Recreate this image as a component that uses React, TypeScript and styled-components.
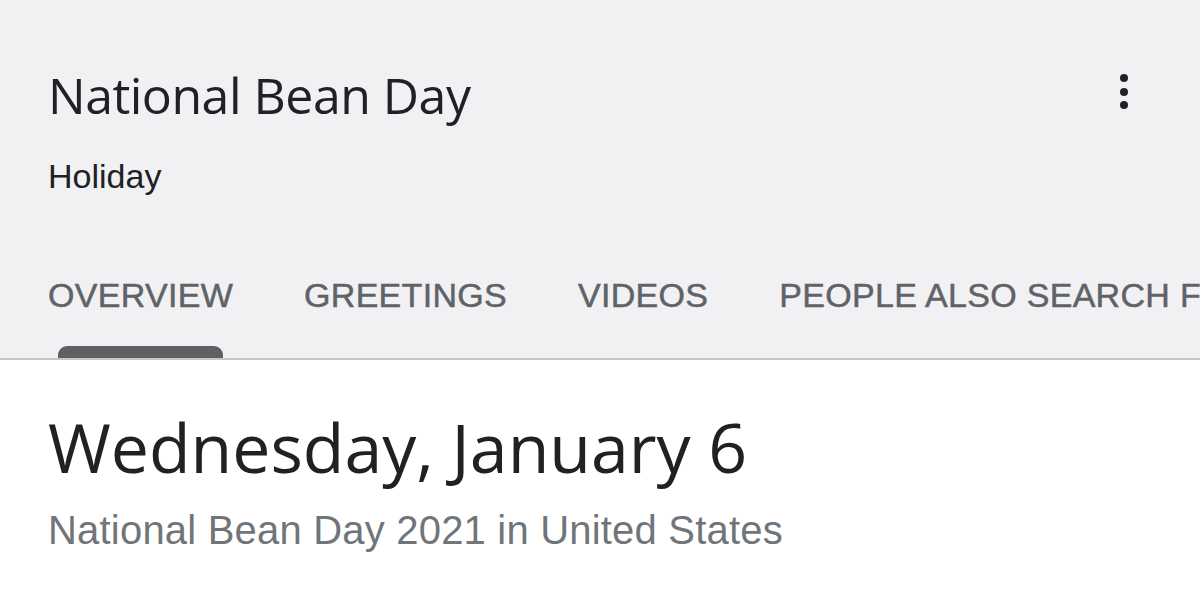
import styled, { createGlobalStyle } from "styled-components";

const GlobalStyle = createGlobalStyle`
    html, body {
        margin: 0;
        padding: 0;
        background: #ffffff;
    }
    body {
        width: 1200px;
        height: 604px;
        overflow: hidden;
    }
`;

const Page = styled.div`
    width: 1200px;
    height: 604px;
    display: flex;
    flex-direction: column;
    background: #ffffff;
`;

const Header = styled.header`
    background: #f1f1f3;
    border-bottom: 2px solid #c6c6c8;
    padding: 0 0 0 48px;
    overflow: hidden;
`;

const TopRow = styled.div`
    display: flex;
    justify-content: space-between;
    align-items: flex-start;
    padding-top: 63px;
    padding-right: 72px;
`;

const Title = styled.h1`
    margin: 0;
    font-family: "Open Sans", sans-serif;
    font-weight: 400;
    font-size: 50px;
    line-height: 64px;
    color: #202124;
    letter-spacing: -0.5px;
`;

const MoreButton = styled.div`
    display: flex;
    flex-direction: column;
    gap: 5.5px;
    padding-top: 11px;
`;

const Dot = styled.span`
    width: 8px;
    height: 8px;
    border-radius: 50%;
    background: #202124;
`;

const Subtitle = styled.div`
    margin-top: 29px;
    font-family: "Liberation Sans", Arial, sans-serif;
    font-size: 34px;
    color: #202124;
    line-height: 40px;
`;

const Tabs = styled.nav`
    display: flex;
    gap: 71px;
    margin-top: 78.5px;
    white-space: nowrap;
`;

const Tab = styled.div<{ $active?: boolean }>`
    position: relative;
    font-family: "Liberation Sans", Arial, sans-serif;
    font-size: 34px;
    line-height: 40px;
    letter-spacing: 0.3px;
    color: #5f6368;
    -webkit-text-stroke: 0.5px #5f6368;
    padding-bottom: 43.5px;
    &::after {
        content: "";
        display: ${(p) => (p.$active ? "block" : "none")};
        position: absolute;
        left: 10px;
        right: 10px;
        bottom: 0;
        height: 12px;
        border-radius: 9px 9px 0 0;
        background: #5f6063;
    }
`;

const Body = styled.section`
    padding: 45px 48px 0;
`;

const DateLine = styled.div`
    font-family: "Open Sans", sans-serif;
    font-size: 68px;
    line-height: 84px;
    color: #202124;
`;

const Caption = styled.div`
    margin-top: 16px;
    font-family: "Liberation Sans", Arial, sans-serif;
    font-size: 40px;
    line-height: 50px;
    letter-spacing: 0.2px;
    color: #70757a;
`;

const tabs = ["OVERVIEW", "GREETINGS", "VIDEOS", "PEOPLE ALSO SEARCH FOR"];

function App() {
    return (
        <Page>
            <GlobalStyle />
            <Header>
                <TopRow>
                    <Title>National Bean Day</Title>
                    <MoreButton>
                        <Dot />
                        <Dot />
                        <Dot />
                    </MoreButton>
                </TopRow>
                <Subtitle>Holiday</Subtitle>
                <Tabs>
                    {tabs.map((t, i) => (
                        <Tab key={t} $active={i === 0}>
                            {t}
                        </Tab>
                    ))}
                </Tabs>
            </Header>
            <Body>
                <DateLine>Wednesday, January 6</DateLine>
                <Caption>National Bean Day 2021 in United States</Caption>
            </Body>
        </Page>
    );
}

export default App;
